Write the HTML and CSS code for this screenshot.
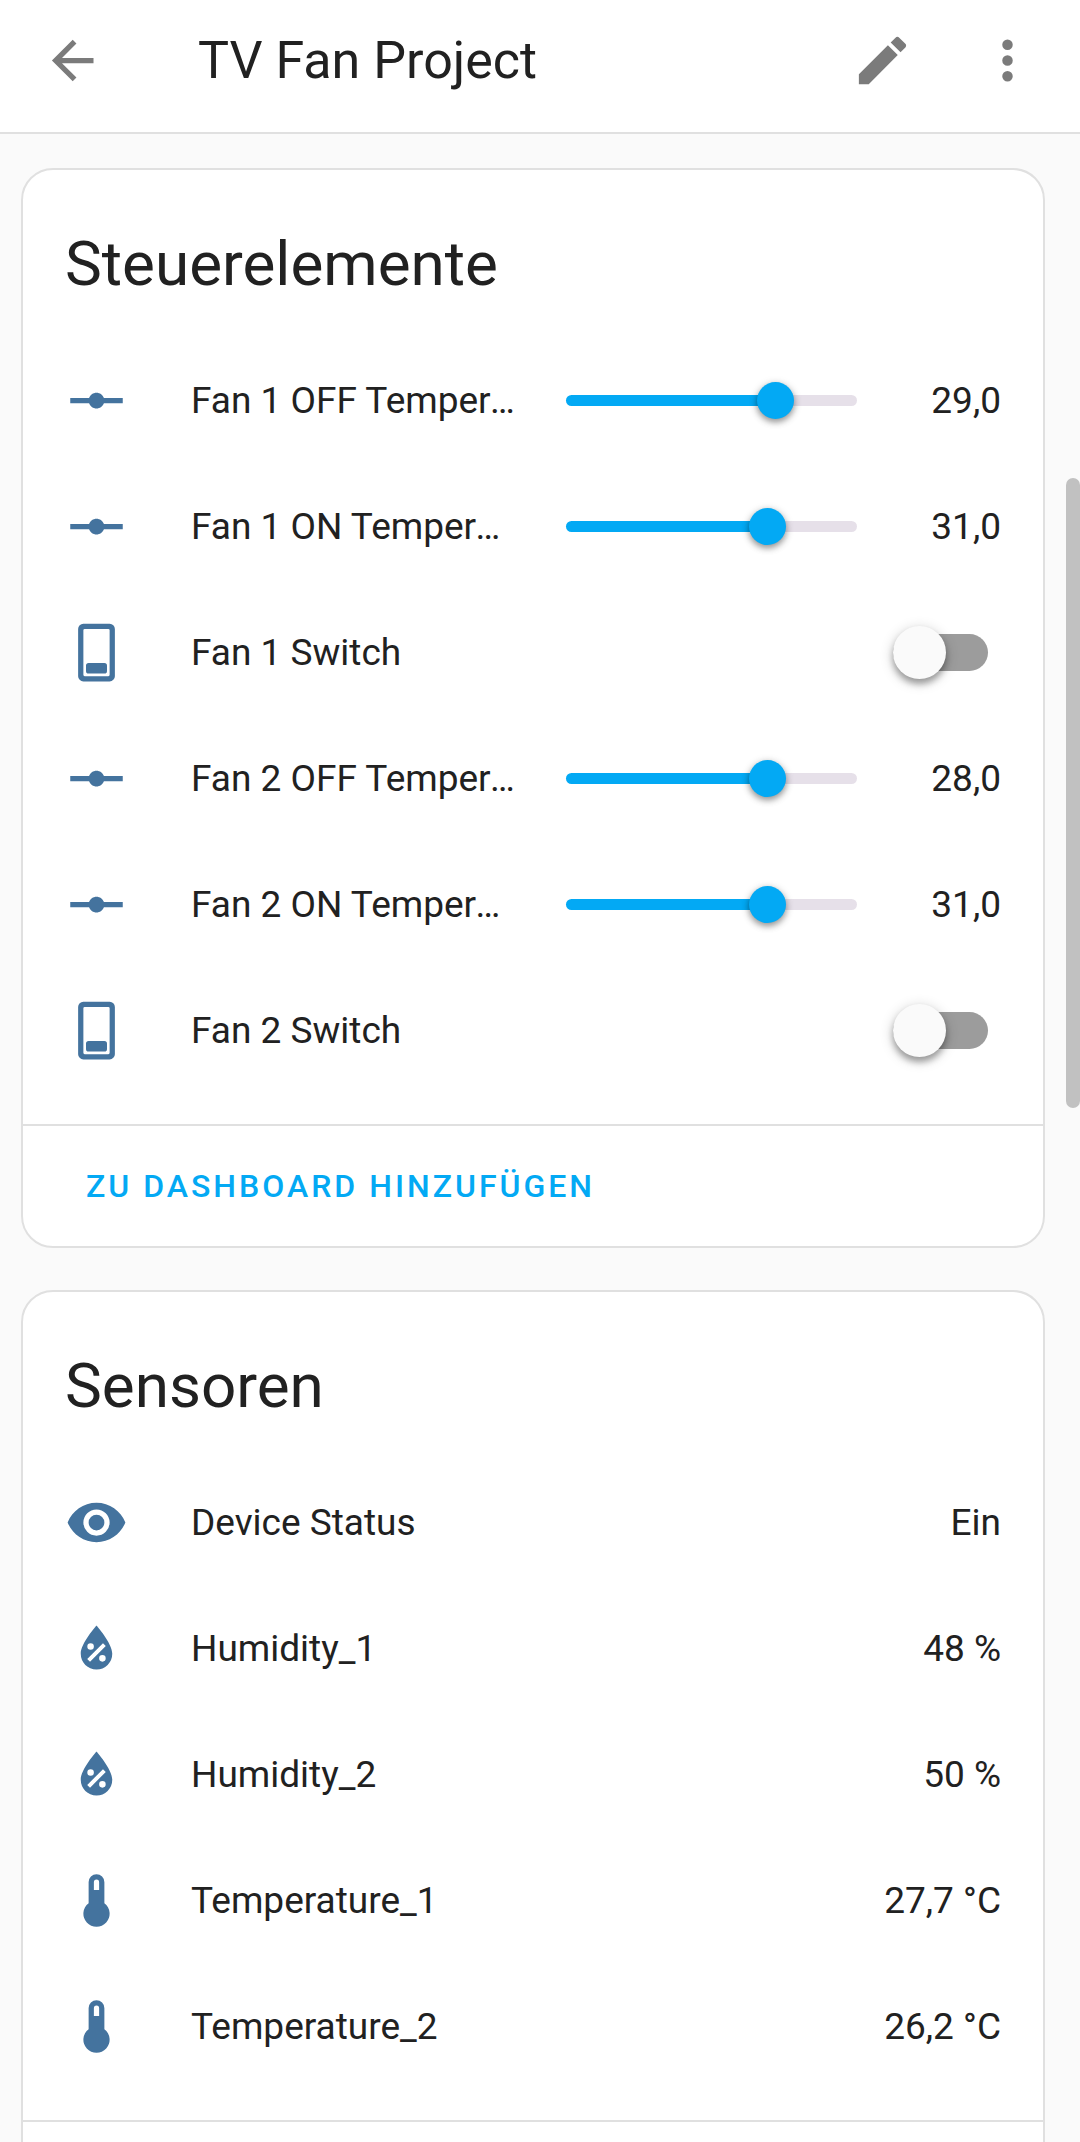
FILE: index.html
```html
<!DOCTYPE html>
<html lang="de">
<head>
<meta charset="utf-8">
<meta name="viewport" content="width=device-width, initial-scale=1">
<title>TV Fan Project</title>
<link rel="stylesheet" href="styles.css">
</head>
<body>
<svg class="sprite" aria-hidden="true">
  <symbol id="slider" viewBox="0 0 24 24"><path d="M2,11H9.17C9.58,9.83 10.69,9 12,9C13.31,9 14.42,9.83 14.83,11H22V13H14.83C14.42,14.17 13.31,15 12,15C10.69,15 9.58,14.17 9.17,13H2V11Z"/></symbol>
  <symbol id="switch" viewBox="0 0 24 24"><path fill-rule="evenodd" d="M7 1H17A2 2 0 0 1 19 3V21A2 2 0 0 1 17 23H7A2 2 0 0 1 5 21V3A2 2 0 0 1 7 1M7.500 3A.5 .5 0 0 0 7 3.500V20.500A.5 .5 0 0 0 7.500 21H16.500A.5 .5 0 0 0 17 20.500V3.500A.5 .5 0 0 0 16.500 3ZM9 16H15A1 1 0 0 1 16 17V19A1 1 0 0 1 15 20H9A1 1 0 0 1 8 19V17A1 1 0 0 1 9 16Z"/></symbol>
  <symbol id="eye" viewBox="0 0 24 24"><path d="M12,9A3,3 0 0,0 9,12A3,3 0 0,0 12,15A3,3 0 0,0 15,12A3,3 0 0,0 12,9M12,17A5,5 0 0,1 7,12A5,5 0 0,1 12,7A5,5 0 0,1 17,12A5,5 0 0,1 12,17M12,4.5C7,4.5 2.73,7.61 1,12C2.73,16.39 7,19.5 12,19.5C17,19.5 21.27,16.39 23,12C21.27,7.61 17,4.5 12,4.5Z"/></symbol>
  <symbol id="humidity" viewBox="0 0 24 24"><path fill-rule="evenodd" d="M12,3.25C12,3.25 6,10 6,14C6,17.32 8.69,20 12,20A6,6 0 0,0 18,14C18,10 12,3.25 12,3.25M14.47,9.97L15.53,11.03L9.53,17.03L8.47,15.97M9.75,10A1.25,1.25 0 0,1 11,11.25A1.25,1.25 0 0,1 9.75,12.5A1.25,1.25 0 0,1 8.5,11.25A1.25,1.25 0 0,1 9.75,10M14.25,14.5A1.25,1.25 0 0,1 15.5,15.75A1.25,1.25 0 0,1 14.25,17A1.25,1.25 0 0,1 13,15.75A1.25,1.25 0 0,1 14.25,14.5Z"/></symbol>
  <symbol id="thermometer" viewBox="0 0 24 24"><path fill-rule="evenodd" d="M15 13V5A3 3 0 0 0 9 5V13A5 5 0 1 0 15 13M12 4A1 1 0 0 1 13 5V8H11V5A1 1 0 0 1 12 4Z"/></symbol>
</svg>

<div class="app">
  <header class="toolbar">
    <button class="icon-button" type="button" aria-label="Zurück">
      <svg class="icon" viewBox="0 0 24 24"><path d="M20,11V13H8L13.5,18.5L12.08,19.92L4.16,12L12.08,4.08L13.5,5.5L8,11H20Z"/></svg>
    </button>
    <h1 class="toolbar-title">TV Fan Project</h1>
    <button class="icon-button" type="button" aria-label="Bearbeiten">
      <svg class="icon" viewBox="0 0 24 24"><path d="M20.71,7.04C21.1,6.65 21.1,6 20.71,5.63L18.37,3.29C18,2.9 17.35,2.9 16.96,3.29L15.12,5.12L18.87,8.87M3,17.25V21H6.75L17.81,9.93L14.06,6.18L3,17.25Z"/></svg>
    </button>
    <button class="icon-button" type="button" aria-label="Menü">
      <svg class="icon" viewBox="0 0 24 24"><path d="M12,16A2,2 0 0,1 14,18A2,2 0 0,1 12,20A2,2 0 0,1 10,18A2,2 0 0,1 12,16M12,10A2,2 0 0,1 14,12A2,2 0 0,1 12,14A2,2 0 0,1 10,12A2,2 0 0,1 12,10M12,4A2,2 0 0,1 14,6A2,2 0 0,1 12,8A2,2 0 0,1 10,6A2,2 0 0,1 12,4Z"/></svg>
    </button>
  </header>

  <main class="content">
    <section class="card">
      <h2 class="card-title">Steuerelemente</h2>
      <div class="rows">
        <div class="row">
          <svg class="icon"><use href="#slider"/></svg>
          <label class="name" for="fan1-off">Fan 1 OFF Temperature</label>
          <input class="range" id="fan1-off" type="range" min="20" max="32" step="0.5" value="29" style="--fill:72%">
          <output class="number" for="fan1-off">29,0</output>
        </div>
        <div class="row">
          <svg class="icon"><use href="#slider"/></svg>
          <label class="name" for="fan1-on">Fan 1 ON Temperature</label>
          <input class="range" id="fan1-on" type="range" min="22" max="34.5" step="0.5" value="31" style="--fill:69%">
          <output class="number" for="fan1-on">31,0</output>
        </div>
        <div class="row">
          <svg class="icon"><use href="#switch"/></svg>
          <label class="name" for="fan1-switch">Fan 1 Switch</label>
          <input class="toggle" id="fan1-switch" type="checkbox" role="switch">
        </div>
        <div class="row">
          <svg class="icon"><use href="#slider"/></svg>
          <label class="name" for="fan2-off">Fan 2 OFF Temperature</label>
          <input class="range" id="fan2-off" type="range" min="19" max="31.5" step="0.5" value="28" style="--fill:69%">
          <output class="number" for="fan2-off">28,0</output>
        </div>
        <div class="row">
          <svg class="icon"><use href="#slider"/></svg>
          <label class="name" for="fan2-on">Fan 2 ON Temperature</label>
          <input class="range" id="fan2-on" type="range" min="22" max="34.5" step="0.5" value="31" style="--fill:69%">
          <output class="number" for="fan2-on">31,0</output>
        </div>
        <div class="row">
          <svg class="icon"><use href="#switch"/></svg>
          <label class="name" for="fan2-switch">Fan 2 Switch</label>
          <input class="toggle" id="fan2-switch" type="checkbox" role="switch">
        </div>
      </div>
      <div class="card-actions">
        <button class="text-button" type="button">ZU DASHBOARD HINZUFÜGEN</button>
      </div>
    </section>

    <section class="card">
      <h2 class="card-title">Sensoren</h2>
      <div class="rows">
        <div class="row">
          <svg class="icon"><use href="#eye"/></svg>
          <span class="name">Device Status</span>
          <span class="state">Ein</span>
        </div>
        <div class="row">
          <svg class="icon"><use href="#humidity"/></svg>
          <span class="name">Humidity_1</span>
          <span class="state">48 %</span>
        </div>
        <div class="row">
          <svg class="icon"><use href="#humidity"/></svg>
          <span class="name">Humidity_2</span>
          <span class="state">50 %</span>
        </div>
        <div class="row">
          <svg class="icon"><use href="#thermometer"/></svg>
          <span class="name">Temperature_1</span>
          <span class="state">27,7 °C</span>
        </div>
        <div class="row">
          <svg class="icon"><use href="#thermometer"/></svg>
          <span class="name">Temperature_2</span>
          <span class="state">26,2 °C</span>
        </div>
      </div>
      <div class="card-actions"></div>
    </section>
  </main>
  <div class="scroll-thumb"></div>
</div>
</body>
</html>
```

FILE: styles.css
```css
:root {
  --primary: #03a9f4;
  --text: #212121;
  --divider: #e0e0e0;
  --state-icon: #44739e;
}

* {
  box-sizing: border-box;
}

body {
  margin: 0;
  background: #fafafa;
  color: var(--text);
  font: 400 37px/53px Roboto, sans-serif;
}

button {
  border: 0;
  background: none;
  font: inherit;
  cursor: pointer;
}

.sprite {
  display: none;
}

.app {
  position: relative;
  display: flex;
  flex-direction: column;
  height: 100vh;
  overflow: hidden;
}

.toolbar {
  display: flex;
  flex: none;
  align-items: center;
  padding: 0 10px 12px;
  height: 134px;
  border-bottom: 2px solid var(--divider);
  background: #fff;
}

.toolbar-title {
  flex: 1;
  margin: 0 0 0 63px;
  font-size: 52px;
  font-weight: 400;
  line-height: 63px;
}

.icon-button {
  display: flex;
  padding: 31px;
  color: #7b7b7b;
}

.icon {
  flex: none;
  width: 63px;
  height: 63px;
  fill: currentColor;
}

.content {
  display: flex;
  flex: 1;
  flex-direction: column;
  gap: 42px;
  min-height: 0;
  padding: 34px 35px 0 21px;
  overflow: hidden;
}

.card {
  flex: none;
  border: 2px solid var(--divider);
  border-radius: 32px;
  background: #fff;
}

.card-title {
  margin: 0;
  padding: 31px 42px 21px;
  font-size: 62px;
  font-weight: 400;
  line-height: 126px;
}

.rows {
  display: flex;
  flex-direction: column;
  gap: 21px;
  padding: 0 42px 41px;
}

.row {
  display: flex;
  align-items: center;
  height: 105px;
}

.row .icon {
  color: var(--state-icon);
}

.name {
  flex: 1;
  min-width: 0;
  margin-left: 63px;
  overflow: hidden;
  text-overflow: ellipsis;
  white-space: nowrap;
}

.state {
  white-space: nowrap;
}

.number {
  width: 144px;
  text-align: right;
}

.range {
  flex: none;
  width: 291px;
  height: 53px;
  margin: 0 0 0 48px;
  appearance: none;
  background: none;
}

.range::-webkit-slider-runnable-track {
  height: 11px;
  border-radius: 6px;
  background: linear-gradient(to right, var(--primary) var(--fill), #e6e0e9 var(--fill));
}

.range::-webkit-slider-thumb {
  appearance: none;
  width: 37px;
  height: 37px;
  margin-top: -13px;
  border-radius: 50%;
  background: var(--primary);
  box-shadow: 0 3px 6px rgba(0, 0, 0, .35), 0 2px 10px rgba(0, 0, 0, .16);
}

.toggle {
  display: flex;
  flex: none;
  align-items: center;
  width: 95px;
  height: 37px;
  margin: 0 13px 0 0;
  border-radius: 19px;
  appearance: none;
  background: #9c9c9c;
}

.toggle::before {
  content: "";
  flex: none;
  width: 53px;
  height: 53px;
  border-radius: 50%;
  background: #fafafa;
  box-shadow: 0 5px 6px rgba(0, 0, 0, .3), 0 3px 14px rgba(0, 0, 0, .2);
}

.toggle:checked {
  justify-content: flex-end;
  background: var(--primary);
}

.card-actions {
  display: flex;
  align-items: center;
  min-height: 122px;
  padding: 0 42px;
  border-top: 2px solid var(--divider);
}

.text-button {
  padding: 0 21px;
  color: var(--primary);
  font-size: 32px;
  font-weight: 500;
  letter-spacing: 3px;
}

.scroll-thumb {
  position: absolute;
  top: 478px;
  right: 0;
  width: 14px;
  height: 630px;
  border-radius: 7px;
  background: #c1c1c1;
}
```
